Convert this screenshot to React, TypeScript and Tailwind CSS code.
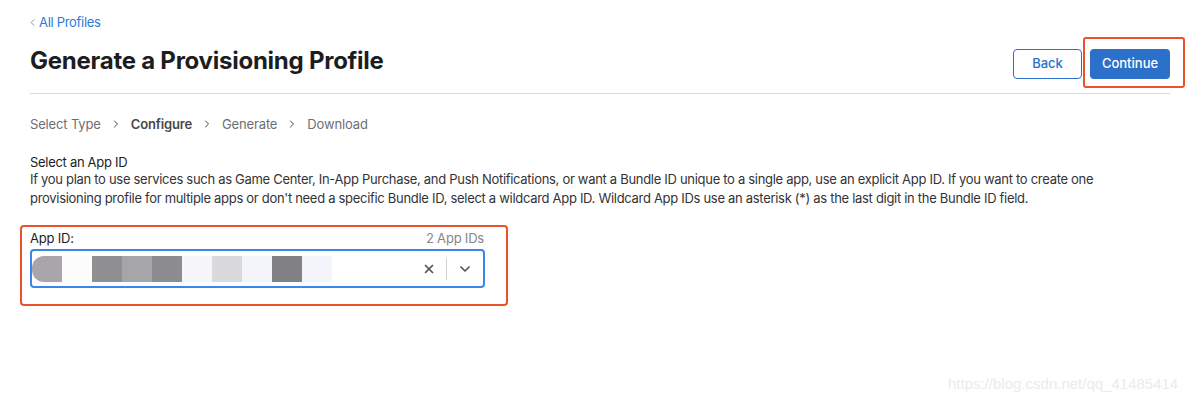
import { X, ChevronDown, ChevronRight, ChevronLeft } from 'lucide-react';

const blurBlocks = [
  { w: 'w-[30px]', c: 'bg-[#aaa5aa] rounded-l-[12px]' },
  { w: 'w-[30px]', c: 'bg-[#fcfcfd]' },
  { w: 'w-[30px]', c: 'bg-[#8f8f92]' },
  { w: 'w-[30px]', c: 'bg-[#a6a5a8]' },
  { w: 'w-[30px]', c: 'bg-[#8d8c90]' },
  { w: 'w-[30px]', c: 'bg-[#f6f6fa]' },
  { w: 'w-[30px]', c: 'bg-[#dadadc]' },
  { w: 'w-[30px]', c: 'bg-[#f4f5fa]' },
  { w: 'w-[30px]', c: 'bg-[#828185]' },
  { w: 'w-[30px]', c: 'bg-[#f4f5fa]' },
];

export default function App() {
  const steps = ['Select Type', 'Configure', 'Generate', 'Download'];

  return (
    <div className="relative w-[1201px] h-[401px] bg-white overflow-hidden font-['Inter',sans-serif] text-[#1d1d1f]">
      <div className="pl-[30px] pr-[31px] pt-[13px]">
        {/* back link */}
        <a className="flex items-center gap-[1px] text-[13px] leading-[18px] tracking-[-0.3px] text-[#2d7bd2] -ml-[3px]">
          <ChevronLeft className="w-[11px] h-[11px]" strokeWidth={1.6} />
          All Profiles
        </a>

        {/* header */}
        <div className="flex items-end justify-between mt-[14px] pb-[14px] border-b border-[#d8d8d8]">
          <h1 className="text-[24px] leading-[32px] font-bold tracking-[-0.25px] mb-[2px]">
            Generate a Provisioning Profile
          </h1>
          <div className="flex gap-[8px]">
            <button className="w-[69px] h-[30px] rounded-[4px] border border-[#2b71c9] text-[13px] font-medium text-[#2b71c9] bg-white">
              Back
            </button>
            <button className="w-[80px] h-[30px] rounded-[4px] bg-[#2b70c9] text-[13px] font-medium text-white">
              Continue
            </button>
          </div>
        </div>

        {/* steps */}
        <div className="flex items-center mt-[21px] text-[13px] leading-[18px] tracking-[-0.15px] text-[#6e6e73]">
          {steps.map((s, i) => (
            <div key={s} className="flex items-center">
              {i > 0 && <ChevronRight className="w-[12px] h-[12px] mx-[9px] text-[#444]" strokeWidth={2} />}
              <span className={s === 'Configure' ? 'font-semibold text-[#48484a]' : ''}>{s}</span>
            </div>
          ))}
        </div>

        {/* description */}
        <div className="mt-[21px] text-[13px] leading-[19px] tracking-[-0.3px] text-[#333336]">
          <p className="text-[#1d1d1f] leading-[16px]">Select an App ID</p>
          <p className="w-[1100px]">
            If you plan to use services such as Game Center, In-App Purchase, and Push Notifications, or want a Bundle ID unique to a single app, use an explicit App ID. If you want to create one provisioning profile for multiple apps or don't need a specific Bundle ID, select a wildcard App ID. Wildcard App IDs use an asterisk (*) as the last digit in the Bundle ID field.
          </p>
        </div>

        {/* App ID select */}
        <div className="w-[455px] mt-[22px]">
          <div className="flex items-end justify-between text-[13px] leading-[17px] tracking-[-0.2px]">
            <span className="text-[#1d1d1f]">App ID:</span>
            <span className="text-[#86868b] pr-[1px]">2 App IDs</span>
          </div>
          <div className="mt-[2px] h-[39px] rounded-[4px] border-2 border-[#3c85ec] flex items-center">
            <div className="flex h-[26px] flex-1">
              {blurBlocks.map((b, i) => (
                <div key={i} className={`${b.w} h-full ${b.c}`} />
              ))}
            </div>
            <X className="w-[14px] h-[14px] text-[#555] mr-[10px]" strokeWidth={3} />
            <div className="w-px h-[22px] bg-[#d4d4d4]" />
            <ChevronDown className="w-[16px] h-[16px] text-[#555] mx-[10px]" strokeWidth={2.6} />
          </div>
        </div>
      </div>

      {/* annotations */}
      <div className="absolute left-[1083px] top-[37px] w-[102px] h-[51px] border-2 border-[#e9532c] rounded-[3px]" />
      <div className="absolute left-[20px] top-[225px] w-[488px] h-[81px] border-2 border-[#e9532c] rounded-[4px]" />

      {/* watermark */}
      <div className="absolute left-[948px] top-[373px] text-[15px] font-['Liberation_Sans',sans-serif] text-[#ebebeb]">
        https://blog.csdn.net/qq_41485414
      </div>
    </div>
  );
}
